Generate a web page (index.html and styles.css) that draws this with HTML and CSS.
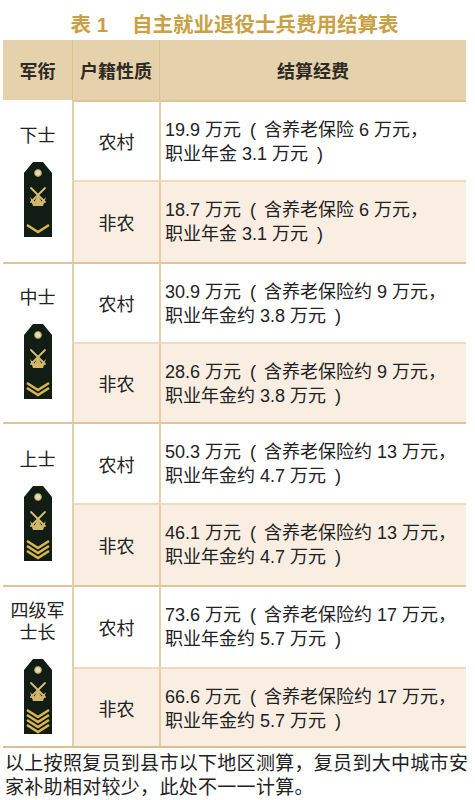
FILE: index.html
```html
<!DOCTYPE html>
<html lang="zh">
<head>
<meta charset="utf-8">
<title>自主就业退役士兵费用结算表</title>
<link rel="stylesheet" href="styles.css">
</head>
<body>
<div class="page">
  <h1 class="title"><span class="tno">表 1</span>自主就业退役士兵费用结算表</h1>
  <div class="tbl">
    <div class="hd">军衔</div>
    <div class="hd col">户籍性质</div>
    <div class="hd col">结算经费</div>

    <div class="rank">
      <div class="rank-name">下士</div>
      <svg class="ep" viewBox="0 0 28 76"><path class="ep-body" d="M0 12 L9 1 L19 1 L28 12 L28 76 L0 76 Z"/><circle class="ep-btn" cx="14" cy="12" r="3.4"/><path class="ep-gun" d="M7 27 L21 41 M21 27 L7 41"/><path class="ep-base" d="M6 36 L9 45 L19 45 L22 36 L17.5 40.5 L14 34 L10.5 40.5 Z"/><path class="ep-chev" d="M3 64 L14 71 L25 64"/></svg>
    </div>
    <div class="hk col grp">农村</div>
    <div class="fee col grp">19.9 万元<span class="po">(</span>含养老保险 6 万元，<br>职业年金 3.1 万元<span class="pc">)</span></div>
    <div class="hk col alt">非农</div>
    <div class="fee col alt">18.7 万元<span class="po">(</span>含养老保险 6 万元，<br>职业年金 3.1 万元<span class="pc">)</span></div>

    <div class="rank grp">
      <div class="rank-name">中士</div>
      <svg class="ep" viewBox="0 0 28 76"><path class="ep-body" d="M0 12 L9 1 L19 1 L28 12 L28 76 L0 76 Z"/><circle class="ep-btn" cx="14" cy="12" r="3.4"/><path class="ep-gun" d="M7 27 L21 41 M21 27 L7 41"/><path class="ep-base" d="M6 36 L9 45 L19 45 L22 36 L17.5 40.5 L14 34 L10.5 40.5 Z"/><path class="ep-chev" d="M3 60 L14 67 L25 60 M3 65 L14 72 L25 65"/></svg>
    </div>
    <div class="hk col grp">农村</div>
    <div class="fee col grp">30.9 万元<span class="po">(</span>含养老保险约 9 万元，<br>职业年金约 3.8 万元<span class="pc">)</span></div>
    <div class="hk col alt">非农</div>
    <div class="fee col alt">28.6 万元<span class="po">(</span>含养老保险约 9 万元，<br>职业年金约 3.8 万元<span class="pc">)</span></div>

    <div class="rank grp">
      <div class="rank-name">上士</div>
      <svg class="ep" viewBox="0 0 28 76"><path class="ep-body" d="M0 12 L9 1 L19 1 L28 12 L28 76 L0 76 Z"/><circle class="ep-btn" cx="14" cy="12" r="3.4"/><path class="ep-gun" d="M7 27 L21 41 M21 27 L7 41"/><path class="ep-base" d="M6 36 L9 45 L19 45 L22 36 L17.5 40.5 L14 34 L10.5 40.5 Z"/><path class="ep-chev" d="M3 56 L14 63 L25 56 M3 61 L14 68 L25 61 M3 66 L14 73 L25 66"/></svg>
    </div>
    <div class="hk col grp">农村</div>
    <div class="fee col grp">50.3 万元<span class="po">(</span>含养老保险约 13 万元，<br>职业年金约 4.7 万元<span class="pc">)</span></div>
    <div class="hk col alt">非农</div>
    <div class="fee col alt">46.1 万元<span class="po">(</span>含养老保险约 13 万元，<br>职业年金约 4.7 万元<span class="pc">)</span></div>

    <div class="rank grp">
      <div class="rank-name">四级军<br>士长</div>
      <svg class="ep" viewBox="0 0 28 76"><path class="ep-body" d="M0 12 L9 1 L19 1 L28 12 L28 76 L0 76 Z"/><circle class="ep-btn" cx="14" cy="12" r="3.4"/><path class="ep-gun" d="M7 25 L21 39 M21 25 L7 39"/><path class="ep-base" d="M6 34 L9 43 L19 43 L22 34 L17.5 38.5 L14 32 L10.5 38.5 Z"/><path class="ep-chev" d="M3 52 L14 59 L25 52 M3 57 L14 64 L25 57 M3 62 L14 69 L25 62 M3 67 L14 74 L25 67"/></svg>
    </div>
    <div class="hk col grp">农村</div>
    <div class="fee col grp">73.6 万元<span class="po">(</span>含养老保险约 17 万元，<br>职业年金约 5.7 万元<span class="pc">)</span></div>
    <div class="hk col alt">非农</div>
    <div class="fee col alt">66.6 万元<span class="po">(</span>含养老保险约 17 万元，<br>职业年金约 5.7 万元<span class="pc">)</span></div>
  </div>
  <p class="note">以上按照复员到县市以下地区测算，复员到大中城市安<br>家补助相对较少，此处不一一计算。</p>
</div>
</body>
</html>
```
FILE: styles.css
```css
* { box-sizing: border-box; }
html, body { margin: 0; padding: 0; background: #ffffff; }
body {
  font-family: "Liberation Sans", "Noto Sans CJK SC", sans-serif;
  color: #222222;
}
.page {
  width: 463px;
  margin-left: 3px;
}
.title {
  margin: 10px 0 0;
  height: 30px;
  line-height: 30px;
  font-size: 20.5px;
  font-weight: 700;
  color: #c9a044;
  text-align: center;
  white-space: nowrap;
}
.tno { margin-right: 24px; }
.tbl {
  display: grid;
  grid-template-columns: 69px 87px 307px;
  grid-template-rows: 60px 80px 82px 80px 80px 81px 82px 82px 79px;
  border-bottom: 2px solid #d9c092;
}
.hd {
  background: #e5d2ac;
  font-size: 18px;
  font-weight: 700;
  display: flex;
  align-items: center;
  justify-content: center;
  color: #2e2a24;
}
.col { border-left: 2px solid #e3d0a8; }
.hd.col { border-left: 1.5px solid #d8c193; }
.rank {
  grid-row: span 2;
  background: #ffffff;
  display: flex;
  flex-direction: column;
  align-items: center;
  justify-content: center;
  gap: 14px;
  font-size: 18px;
}
.rank-name {
  text-align: center;
  line-height: 22px;
}
.grp { border-top: 2px solid #ddc699; }
.alt {
  background: #faeee2;
  border-top: 2px solid #ecdcbc;
}
.hk {
  display: flex;
  align-items: center;
  justify-content: center;
  font-size: 18px;
}
.fee {
  display: block;
  padding: 16px 0 0 4px;
  font-size: 18px;
  line-height: 24px;
  white-space: nowrap;
}
.po { margin: 0 8px 0 9px; }
.pc { margin-left: 9px; }
.ep { width: 28px; height: 76px; display: block; }
.ep-body { fill: #111c14; }
.ep-btn { fill: #e4ddb4; stroke: #b79a4e; stroke-width: 1; }
.ep-gun { stroke: #d7bf72; stroke-width: 1.8; fill: none; stroke-linecap: round; }
.ep-base { fill: #d2b769; }
.ep-chev { stroke: #d9b650; stroke-width: 2.6; fill: none; }
.note {
  margin: 4px 0 0;
  padding-left: 2px;
  font-size: 19px;
  letter-spacing: 0.3px;
  line-height: 24px;
  white-space: nowrap;
  color: #222222;
}
```
